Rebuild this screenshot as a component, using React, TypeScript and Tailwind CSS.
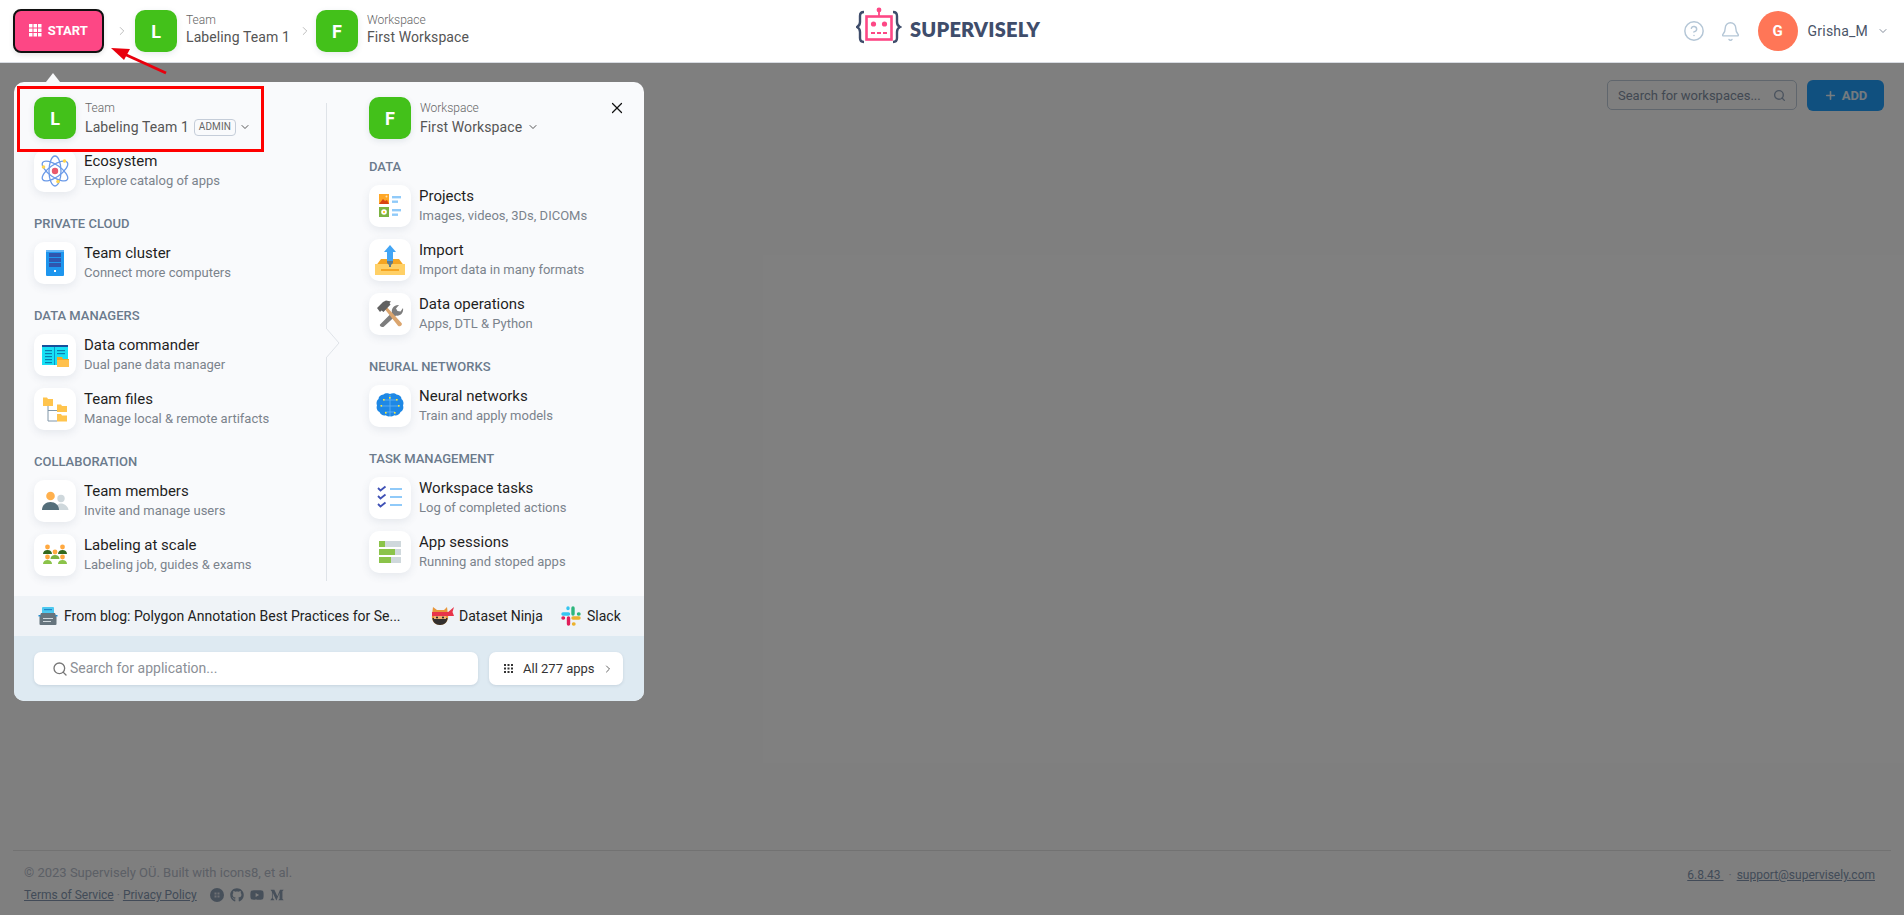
import React from "react";
import { Bell, ChevronDown, ChevronRight, CircleHelp, Plus, Search, X } from "lucide-react";
import { FaGithub, FaMediumM, FaYoutube } from "react-icons/fa";

const Svg = ({ children }: { children: React.ReactNode }) => (
  <svg width="42" height="42" viewBox="0 0 42 42">{children}</svg>
);

const Atom = () => (
  <Svg>
    <g fill="none" stroke="#6c9be8" strokeWidth="1.3">
      <ellipse cx="21" cy="21" rx="15" ry="6" transform="rotate(35 21 21)" />
      <ellipse cx="21" cy="21" rx="15" ry="6" transform="rotate(-35 21 21)" />
      <ellipse cx="21" cy="21" rx="15" ry="6" transform="rotate(90 21 21)" />
    </g>
    <circle cx="21" cy="21" r="3.2" fill="#e9586c" />
    <circle cx="9.5" cy="17" r="1.8" fill="#ffd54f" />
    <circle cx="30.5" cy="11" r="1.8" fill="#ffd54f" />
    <circle cx="24" cy="31.5" r="1.8" fill="#ffd54f" />
  </Svg>
);
const Server = () => (
  <Svg>
    <rect x="12" y="8" width="18" height="26" rx="1" fill="#1e96ee" />
    <rect x="12" y="8" width="18" height="2" fill="#64b5f6" />
    <rect x="15" y="11" width="12" height="4" fill="#2f55ae" />
    <rect x="15" y="16" width="12" height="4" fill="#2f55ae" />
    <rect x="15" y="21" width="12" height="4" fill="#2f55ae" />
    <rect x="20" y="28" width="2" height="2" fill="#fff" />
  </Svg>
);
const Commander = () => (
  <Svg>
    <rect x="8" y="11" width="26" height="20" fill="#18e0f5" />
    <rect x="8" y="11" width="26" height="2" fill="#164f9c" />
    <rect x="20" y="13" width="1" height="18" fill="#0b97c9" />
    <g fill="#0a7fb0">
      <rect x="11" y="16" width="7" height="1.2" />
      <rect x="11" y="19" width="7" height="1.2" />
      <rect x="11" y="22" width="7" height="1.2" />
      <rect x="11" y="25" width="7" height="1.2" />
      <rect x="11" y="28" width="7" height="1.2" />
      <rect x="23" y="16" width="8" height="1.2" />
      <rect x="23" y="19" width="8" height="1.2" />
    </g>
    <path d="M23 23h5l1 2h6v8H23z" fill="#f5a623" />
    <rect x="23" y="26" width="12" height="7" fill="#ffc14d" />
  </Svg>
);
const Folders = () => (
  <Svg>
    <path d="M14 16v17h9M14 22.5h9" fill="none" stroke="#8096a8" strokeWidth="1" />
    <path d="M9 9.5h4l1 1.5h5v7H9z" fill="#ffc44d" />
    <path d="M23 16.5h4l1 1.5h5v6H23z" fill="#ffc44d" />
    <path d="M23 26h4l1 1.5h5v6H23z" fill="#ffc44d" />
  </Svg>
);
const Members = () => (
  <Svg>
    <circle cx="27" cy="18.5" r="3.7" fill="#cfd8dc" />
    <path d="M21 30c0-4 3-6.500 6-6.500s7 2.500 7.500 6.500z" fill="#cfd8dc" />
    <circle cx="16.5" cy="16" r="4.3" fill="#ffb04d" />
    <path d="M8 30c0-5 3.800-8 8.500-8s8.500 3 8.500 8z" fill="#546e7a" />
  </Svg>
);
const Person = ({ x, y, c }: { x: number; y: number; c: string }) => (
  <g>
    <circle cx={x} cy={y} r="2.4" fill="#ffa940" />
    <path d={`M${x - 4.5} ${y + 7}c0-2.500 2-4 4.500-4s4.500 1.500 4.500 4z`} fill={c} />
  </g>
);
const Labeling = () => (
  <Svg>
    <Person x={13.5} y={13} c="#33691e" />
    <Person x={28.5} y={13} c="#33691e" />
    <Person x={21} y={18} c="#7cb342" />
    <Person x={13.5} y={23} c="#8bc34a" />
    <Person x={28.5} y={23} c="#8bc34a" />
  </Svg>
);
const Projects = () => (
  <Svg>
    <rect x="10" y="9" width="10" height="10" fill="#ffa726" />
    <path d="M10 19l4-5 2 2 2-1 2 4z" fill="#d84315" />
    <circle cx="17.5" cy="11.5" r="1" fill="#ffe0b2" />
    <rect x="10" y="22" width="10" height="10" fill="#7cb342" />
    <circle cx="15" cy="27" r="2.8" fill="#fff" />
    <circle cx="15" cy="27" r="1.1" fill="#ffc107" />
    <g fill="#90caf9">
      <rect x="23" y="11" width="9" height="2.4" />
      <rect x="23" y="15.5" width="6" height="2.4" />
      <rect x="23" y="24" width="9" height="2.4" />
      <rect x="23" y="28.5" width="6" height="2.4" />
    </g>
  </Svg>
);
const ImportIcon = () => (
  <Svg>
    <path d="M12 20h18l6 8H6z" fill="#f5a623" />
    <rect x="6" y="25" width="30" height="11" fill="#ffd066" />
    <rect x="12" y="30" width="18" height="2" fill="#f5a623" />
    <rect x="18" y="12" width="6" height="12" fill="#42a5f5" />
    <path d="M21 6l6 7H15z" fill="#42a5f5" />
    <path d="M18 22h6v2l-2 2v2h-2v-2l-2-2z" fill="#607d8b" />
  </Svg>
);
const Tools = () => (
  <Svg>
    <path d="M11 31.500l12-12c-1-3.500 2-8 7-7.500l-3 3.500 1.500 2.500 3 .5 2.500-3.500c1 5-3 8.500-7 7.500L15 33.500c-1.500 1.500-5-.5-4-2z" fill="#7d7d7d" />
    <path d="M14.500 14.500l2-2L32.500 30c1 1 0 2.500-1 3-.8.500-1.800.500-2.500-.3z" fill="#dba56e" />
    <path d="M8 15l6-6 3-1.500 5 1-1.500 1.500 1 1.500-7 7.500-2-1.500-1.500 1.500z" fill="#616161" />
  </Svg>
);
const Brain = () => (
  <Svg>
    <path d="M21 9c-1.500-1-5-1.300-6.500.5-3 .2-5 2.200-5 4.500-2 1.500-2.500 4.500-1.500 6.500-1 2.500.2 5.500 2.500 6.500 1 2.700 4 4 6 3.300 1.700 1.300 3.500 1.300 4.500.700 1 .6 2.800.6 4.500-.7 2 .7 5-.6 6-3.300 2.300-1 3.500-4 2.500-6.500 1-2 .5-5-1.500-6.500 0-2.300-2-4.300-5-4.500C26 7.700 22.500 8 21 9z" fill="#1e88e5" />
    <path d="M21 10v22M15 15h12M12 21h18M16 27h10" stroke="#64b5f6" strokeWidth="0.8" fill="none" />
    <g fill="#ffeb3b">
      <rect x="14" y="14" width="1.6" height="1.6" />
      <rect x="27" y="14" width="1.6" height="1.6" />
      <rect x="11.5" y="20" width="1.6" height="1.6" />
      <rect x="29" y="20" width="1.6" height="1.6" />
      <rect x="16" y="27" width="1.6" height="1.6" />
      <rect x="25" y="27" width="1.6" height="1.6" />
      <rect x="20" y="12" width="1.6" height="1.6" />
    </g>
  </Svg>
);
const Tasks = () => (
  <Svg>
    <path d="M9 11l2.500 2.500 5-4M9 19l2.500 2.500 5-4M9 27l2.500 2.500 5-4" fill="none" stroke="#3f51b5" strokeWidth="1.8" />
    <g fill="#90caf9">
      <rect x="21" y="11" width="12" height="2" />
      <rect x="21" y="19" width="12" height="2" />
      <rect x="21" y="27" width="12" height="2" />
    </g>
  </Svg>
);
const Sessions = () => (
  <Svg>
    <rect x="10" y="10" width="22" height="6" fill="#cfd8dc" />
    <rect x="10" y="18" width="22" height="6" fill="#cfd8dc" />
    <rect x="10" y="26" width="22" height="6" fill="#cfd8dc" />
    <rect x="10" y="10" width="6" height="6" fill="#8bc34a" />
    <rect x="10" y="18" width="16" height="6" fill="#8bc34a" />
    <rect x="10" y="26" width="12" height="6" fill="#8bc34a" />
  </Svg>
);

const Blog = () => (
  <svg width="20" height="20" viewBox="0 0 20 20">
    <rect x="4" y="1" width="12" height="8" rx="1" fill="#4dc9f0" />
    <rect x="6" y="3" width="8" height="1.2" fill="#1e88c9" />
    <path d="M3 7h14l1.500 4v7a1 1 0 0 1-1 1h-15a1 1 0 0 1-1-1v-7z" fill="#65747d" />
    <rect x="5" y="12" width="10" height="1" fill="#cfd8dc" />
    <rect x="5" y="15" width="8" height="1" fill="#cfd8dc" />
    <rect x="0.5" y="9" width="2" height="1.5" fill="#1e88c9" />
    <rect x="17.5" y="9" width="2" height="1.5" fill="#1e88c9" />
  </svg>
);
const Ninja = () => (
  <svg width="24" height="20" viewBox="0 0 24 20">
    <path d="M2 1l4 3h7l3-3 1 8c1 6-3 10-8 10S0 15 1 9z" fill="#e8963a" />
    <path d="M1 6h16v4H1z" fill="#e8344a" />
    <path d="M16 7l7-6-1.500 5 1.500 4-7 0z" fill="#e8344a" />
    <path d="M1.500 12h15c0 4-3 7-7.500 7s-7.500-3-7.500-7z" fill="#33302f" />
    <rect x="3" y="10" width="12" height="3" fill="#f0b070" />
    <circle cx="6" cy="11.500" r="1" fill="#222" />
    <circle cx="12" cy="11.500" r="1" fill="#222" />
  </svg>
);
const Slack = () => (
  <svg width="20" height="20" viewBox="0 0 20 20">
    <g strokeWidth="3.4" strokeLinecap="round" fill="none">
      <path d="M2 8h5.500M7 2v.5" stroke="#36c5f0" />
      <path d="M12 2v6M18 8h-.5" stroke="#2eb67d" />
      <path d="M18 12h-6M13 18h-.5" stroke="#ecb22e" />
      <path d="M7.500 18v-6M2 12h.5" stroke="#e01e5a" />
    </g>
  </svg>
);
const Grid = ({ size, gap, color }: { size: number; gap: number; color: string }) => {
  const cells = [0, 1, 2];
  const full = size * 3 + gap * 2;
  return (
    <svg width={full} height={full} viewBox={`0 0 ${full} ${full}`} fill={color}>
      {cells.flatMap((r) =>
        cells.map((c) => <rect key={`${r}${c}`} x={c * (size + gap)} y={r * (size + gap)} width={size} height={size} />)
      )}
    </svg>
  );
};

const Avatar = ({ letter }: { letter: string }) => (
  <div className="w-[42px] h-[42px] shrink-0 rounded-[10px] bg-[#43c11a] text-white flex items-center justify-center font-bold text-[18px] shadow-[0_2px_6px_rgba(60,80,110,0.12)]">
    {letter}
  </div>
);

const Row = ({ icon, title, sub }: { icon: React.ReactNode; title: string; sub: string }) => (
  <div className="flex gap-2 h-[42px]">
    <div className="w-[42px] h-[42px] shrink-0 rounded-[10px] bg-white shadow-[0_3px_8px_rgba(60,80,110,0.1)]">{icon}</div>
    <div className="flex flex-col">
      <div className="text-[15px] leading-[20px] mt-[1px] text-[#1f1f1f]">{title}</div>
      <div className="text-[13px] leading-[18px] mt-[1px] text-[#7b838c]">{sub}</div>
    </div>
  </div>
);

const Label = ({ children, top }: { children: React.ReactNode; top: string }) => (
  <div className={`${top} mb-[10px] h-[16px] leading-[16px] text-[13px] font-medium uppercase text-[#6b7a8c]`}>{children}</div>
);

const Chev = () => <ChevronDown size={12} strokeWidth={1.8} className="text-[#444]" />;

export default function App() {
  return (
    <div className="relative h-[915px] overflow-hidden bg-white font-['Roboto',sans-serif] flex flex-col">
      <header className="relative z-20 h-[63px] shrink-0 bg-white border-b border-[#d8dce2] flex items-center pl-[13px] pr-[15px]">
        <div className="w-[91px] h-[44px] -mt-[1px] rounded-[8px] border-2 border-[#111] bg-[#fd4785] text-white flex items-center justify-center gap-[6px] font-bold text-[13px] shadow-[0_2px_5px_rgba(0,0,0,0.1)]">
          <Grid size={3.5} gap={1} color="#fff" />
          START
        </div>
        <ChevronRight size={14} strokeWidth={1.2} className="ml-[11px] text-[#a0a0a0]" />
        <div className="ml-[6px] flex items-center gap-[9px]">
          <Avatar letter="L" />
          <div className="-mt-[3px]">
            <div className="text-[12px] leading-[16px] font-light text-[#666]">Team</div>
            <div className="text-[14px] leading-[19px] text-[#555] tracking-[0.1px]">Labeling Team 1</div>
          </div>
        </div>
        <ChevronRight size={14} strokeWidth={1.2} className="ml-[8px] text-[#a0a0a0]" />
        <div className="ml-[4px] flex items-center gap-[9px]">
          <Avatar letter="F" />
          <div className="-mt-[3px]">
            <div className="text-[12px] leading-[16px] font-light text-[#666]">Workspace</div>
            <div className="text-[14px] leading-[19px] text-[#555] tracking-[0.1px]">First Workspace</div>
          </div>
        </div>
        <div className="absolute left-[856px] top-[7px] flex items-center gap-[8px]">
          <svg width="46" height="40" viewBox="0 0 46 40">
            <path d="M7 5c-3 0-4 1-4 4v6c0 3-1 4-3 5 2 1 3 2 3 5v6c0 3 1 4 4 4" transform="translate(1 0)" fill="none" stroke="#3f4d6b" strokeWidth="2.4" />
            <path d="M38 5c3 0 4 1 4 4v6c0 3 1 4 3 5-2 1-3 2-3 5v6c0 3-1 4-4 4" transform="translate(-1 0)" fill="none" stroke="#3f4d6b" strokeWidth="2.4" />
            <rect x="10.5" y="9.5" width="25" height="23" fill="none" stroke="#fd4785" strokeWidth="2.6" />
            <path d="M23 9V3" stroke="#fd4785" strokeWidth="1.8" />
            <circle cx="23" cy="3" r="2.4" fill="#fd4785" />
            <circle cx="17.5" cy="17" r="2.6" fill="#fd4785" />
            <circle cx="28.5" cy="17" r="2.6" fill="#fd4785" />
            <path d="M15 26h16" stroke="#fd4785" strokeWidth="1.8" strokeDasharray="4 2" />
          </svg>
          <span className="mt-[3px] font-['Lato',sans-serif] font-extrabold text-[20px] tracking-[0.2px] text-[#3f4d6b]">SUPERVISELY</span>
        </div>
        <div className="ml-auto flex items-center">
          <CircleHelp size={22} strokeWidth={1.6} className="text-[#b4c6d6]" />
          <Bell size={21} strokeWidth={1.6} className="ml-[15px] text-[#b4c6d6]" />
          <div className="ml-[17px] w-[40px] h-[40px] rounded-full bg-[#ff7657] text-white flex items-center justify-center font-bold text-[15px]">G</div>
          <span className="ml-[10px] text-[14px] text-[#4a5568] tracking-[0.2px]">Grisha_M</span>
          <ChevronDown size={12} strokeWidth={1.5} className="ml-[9px] text-[#5a6578]" />
        </div>
      </header>

      <main className="flex-1 flex justify-end items-start pt-[17px] pr-[20px] gap-[10px]">
        <div className="w-[190px] h-[30px] rounded-[5px] border border-[#c0ccda] flex items-center justify-between pl-[10px] pr-[10px] text-[13px] text-[#8391a5]">
          <span className="pt-[1px]">Search for workspaces...</span>
          <Search size={13} strokeWidth={2.5} className="text-[#97a8be]" />
        </div>
        <div className="w-[77px] h-[31px] rounded-[6px] bg-[#20a0ff] text-white/90 flex items-center justify-center gap-[5px] font-bold text-[13px]">
          <Plus size={13} strokeWidth={3} />
          ADD
        </div>
      </main>

      <footer className="mx-[13px] h-[65px] shrink-0 border-t border-[#e5e5e5] flex justify-between pl-[11px] pr-[16px] pt-[12px] text-[12px] text-[#b8c0cc]">
        <div>
          <div className="leading-[20px] text-[13px]">© 2023 Supervisely OÜ. Built with icons8, et al.</div>
          <div className="mt-[2px] leading-[20px] flex items-center text-[#8497b0]">
            <span className="underline">Terms of Service</span>
            <span className="mx-[3px] text-[#b8c0cc]">·</span>
            <span className="underline">Privacy Policy</span>
            <span className="ml-[13px] flex items-center gap-[6px] text-[#8fa0b5]">
              <svg width="14" height="14" viewBox="0 0 14 14">
                <circle cx="7" cy="7" r="7" fill="#8fa0b5" />
                <path d="M4.500 4.500h2v2h-2zM7.500 4.500h2v2h-2zM4.500 7.500h2v2h-2zM7.500 7.500h2v2h-2z" fill="#fff" opacity="0.7" />
              </svg>
              <FaGithub size={14} />
              <FaYoutube size={14} />
              <FaMediumM size={14} />
            </span>
          </div>
        </div>
        <div className="pt-[2px] leading-[20px] flex">
          <span className="underline text-[#8497b0] whitespace-pre">6.8.43 </span>
          <span className="mx-[5px]">·</span>
          <span className="underline text-[#8497b0]">support@supervisely.com</span>
        </div>
      </footer>

      <div className="absolute inset-0 z-10 bg-black/50" />

      <div className="absolute z-30 left-[14px] top-[82px] w-[630px] h-[619px] rounded-[10px] bg-[#f9fafc] flex flex-col overflow-hidden">
        <div className="flex-1 flex relative pt-[15px]">
          <button className="absolute right-[18px] top-[17px] text-[#111]">
            <X size={18} strokeWidth={1.6} />
          </button>
          <div className="w-[312px] pl-[20px]">
            <div className="flex gap-[9px] h-[42px]">
              <Avatar letter="L" />
              <div>
                <div className="text-[12px] leading-[16px] font-light text-[#666] mt-[3px]">Team</div>
                <div className="flex items-center text-[14px] leading-[20px] text-[#555] mt-[1px] tracking-[0.1px]">
                  Labeling Team 1
                  <span className="ml-[5px] h-[17px] w-[42px] rounded-[4px] border border-[#c5cdd9] flex items-center justify-center text-[10px] text-[#666]">ADMIN</span>
                  <span className="ml-[3px]"><Chev /></span>
                </div>
              </div>
            </div>
            <div className="mt-[11px]"><Row icon={<Atom />} title="Ecosystem" sub="Explore catalog of apps" /></div>
            <Label top="mt-[24px]">Private cloud</Label>
            <Row icon={<Server />} title="Team cluster" sub="Connect more computers" />
            <Label top="mt-[24px]">Data managers</Label>
            <div className="flex flex-col gap-[12px]">
              <Row icon={<Commander />} title="Data commander" sub="Dual pane data manager" />
              <Row icon={<Folders />} title="Team files" sub="Manage local & remote artifacts" />
            </div>
            <Label top="mt-[24px]">Collaboration</Label>
            <div className="flex flex-col gap-[12px]">
              <Row icon={<Members />} title="Team members" sub="Invite and manage users" />
              <Row icon={<Labeling />} title="Labeling at scale" sub="Labeling job, guides & exams" />
            </div>
          </div>
          <div className="relative w-px h-[478px] mt-[6px] bg-[#dfe3e8]">
            <svg width="14" height="30" viewBox="0 0 14 30" className="absolute left-0 top-[225px]">
              <path d="M0 0l13 15L0 30z" fill="#f9fafc" />
              <path d="M0 0l13 15L0 30" fill="none" stroke="#dfe3e8" />
            </svg>
          </div>
          <div className="pl-[42px]">
            <div className="flex gap-[9px] h-[42px]">
              <Avatar letter="F" />
              <div>
                <div className="text-[12px] leading-[16px] font-light text-[#666] mt-[3px]">Workspace</div>
                <div className="flex items-center text-[14px] leading-[20px] text-[#555] mt-[1px] tracking-[0.1px]">
                  First Workspace
                  <span className="ml-[5px]"><Chev /></span>
                </div>
              </div>
            </div>
            <Label top="mt-[20px]">Data</Label>
            <div className="flex flex-col gap-[12px]">
              <Row icon={<Projects />} title="Projects" sub="Images, videos, 3Ds, DICOMs" />
              <Row icon={<ImportIcon />} title="Import" sub="Import data in many formats" />
              <Row icon={<Tools />} title="Data operations" sub="Apps, DTL & Python" />
            </div>
            <Label top="mt-[24px]">Neural networks</Label>
            <Row icon={<Brain />} title="Neural networks" sub="Train and apply models" />
            <Label top="mt-[24px]">Task management</Label>
            <div className="flex flex-col gap-[12px]">
              <Row icon={<Tasks />} title="Workspace tasks" sub="Log of completed actions" />
              <Row icon={<Sessions />} title="App sessions" sub="Running and stoped apps" />
            </div>
          </div>
        </div>
        <div className="h-[40px] shrink-0 bg-[#eff3f7] flex items-center pl-[24px] text-[14px] text-[#222] whitespace-nowrap">
          <Blog />
          <span className="ml-[6px] w-[339px] shrink-0">From blog: Polygon Annotation Best Practices for Se...</span>
          <span className="ml-[28px]"><Ninja /></span>
          <span className="ml-[4px] w-[84px] shrink-0">Dataset Ninja</span>
          <span className="ml-[18px]"><Slack /></span>
          <span className="ml-[6px]">Slack</span>
        </div>
        <div className="h-[65px] shrink-0 bg-[#deeaf2] flex items-center gap-[11px] pl-[20px] pr-[21px]">
          <div className="flex-1 h-[33px] rounded-[7px] bg-white shadow-[0_1px_3px_rgba(60,80,110,0.15)] flex items-center pl-[18px] gap-[2px] text-[14px] text-[#8b8f96]">
            <Search size={16} strokeWidth={2} className="text-[#777]" />
            Search for application...
          </div>
          <div className="w-[134px] h-[33px] rounded-[7px] bg-white shadow-[0_1px_3px_rgba(60,80,110,0.15)] flex items-center pl-[15px] text-[13px] text-[#333]">
            <Grid size={2} gap={1.5} color="#333" />
            <span className="ml-[10px]">All 277 apps</span>
            <ChevronRight size={12} strokeWidth={1.5} className="ml-[7px]" />
          </div>
        </div>
      </div>

      <svg width="14" height="9" viewBox="0 0 14 9" className="absolute z-30 left-[46px] top-[73px]">
        <path d="M0 9L7 0l7 9z" fill="#f9fafc" />
      </svg>
      <div className="absolute z-40 left-[17px] top-[86px] w-[247px] h-[66px] border-[3px] border-[#f00]" />
      <svg width="70" height="40" viewBox="0 0 70 40" className="absolute z-40 left-[105px] top-[40px]">
        <path d="M61 33L17 13" stroke="#e8000d" strokeWidth="3" />
        <path d="M6 8l19 1-6 11z" fill="#e8000d" />
      </svg>
    </div>
  );
}
